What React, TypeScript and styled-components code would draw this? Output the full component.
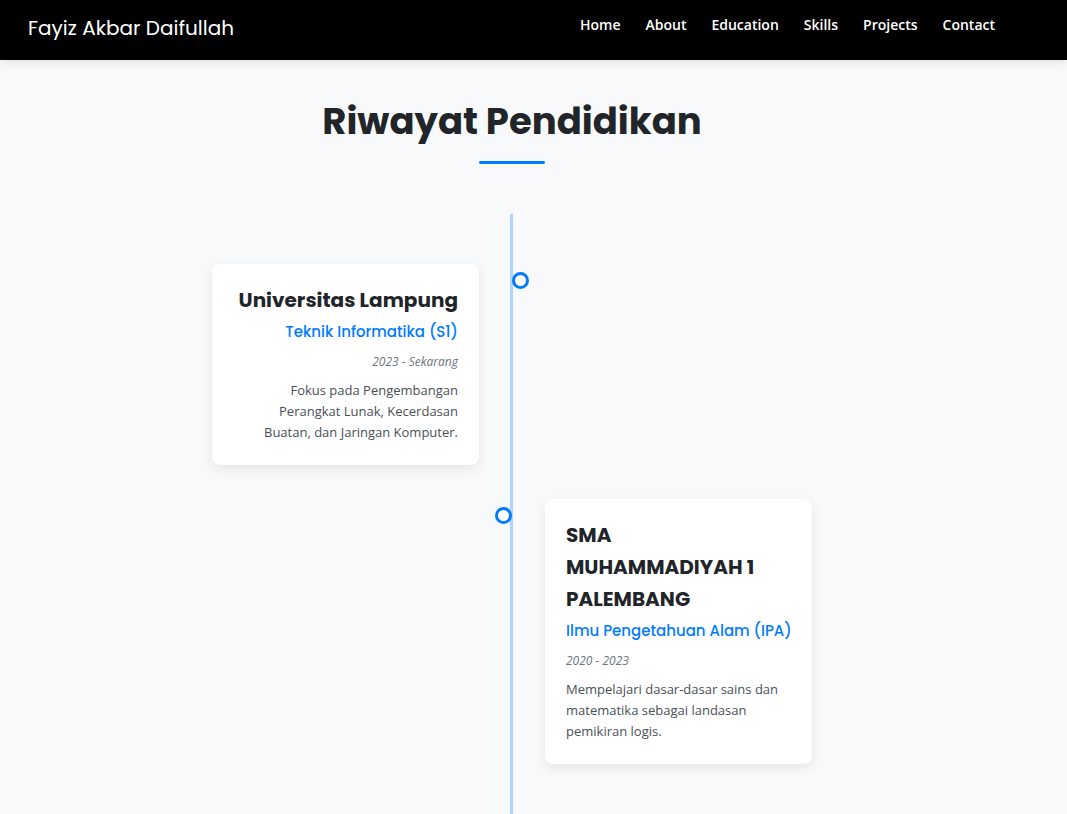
import React from "react";
import styled, { createGlobalStyle } from "styled-components";

const GlobalStyle = createGlobalStyle`
  *, *::before, *::after { box-sizing: border-box; }
  body {
    margin: 0;
    background: #f8f9fb;
    color: #212529;
    font-family: "Open Sans", "Noto Sans", sans-serif;
  }
  h1, h2, h3, h4, p, ul, ol { margin: 0; padding: 0; }
  ul, ol { list-style: none; }
`;

const displayFont = `Poppins, Inter, "Open Sans", sans-serif`;

const Header = styled.header`
  display: flex;
  justify-content: space-between;
  align-items: flex-start;
  height: 60px;
  padding: 12px 72px 0 28px;
  background: #000;
  box-shadow: 0 2px 10px rgba(0, 0, 0, 0.1);
`;

const Brand = styled.a`
  color: #fff;
  font: 400 20px/32px ${displayFont};
  text-decoration: none;
`;

const NavList = styled.ul`
  display: flex;
  gap: 25px;
`;

const NavLink = styled.a`
  display: block;
  color: #fff;
  font-size: 14px;
  font-weight: 600;
  line-height: 26px;
  text-decoration: none;
`;

const Section = styled.main`
  padding: 34px 43px 0 0;
`;

const Title = styled.h1`
  display: flex;
  flex-direction: column;
  align-items: center;
  font: 700 37px/54px ${displayFont};

  &::after {
    content: "";
    width: 66px;
    height: 3px;
    margin-top: 13px;
    border-radius: 2px;
    background: #007bff;
  }
`;

const Timeline = styled.ol`
  position: relative;
  display: flex;
  flex-direction: column;
  gap: 34px;
  max-width: 666px;
  margin: 50px auto 0;
  padding: 50px 0;

  &::before {
    content: "";
    position: absolute;
    top: 0;
    bottom: 0;
    left: calc(50% - 2px);
    width: 3px;
    background: #b0d4ff;
  }
`;

type Side = "left" | "right";

const Item = styled.li<{ $side: Side }>`
  position: relative;
  width: 50%;
  padding: 0 33px;
  align-self: ${(p) => (p.$side === "left" ? "flex-start" : "flex-end")};
  text-align: ${(p) => (p.$side === "left" ? "right" : "left")};

  &::after {
    content: "";
    position: absolute;
    top: 8px;
    ${(p) => (p.$side === "left" ? "right" : "left")}: -17px;
    width: 17px;
    height: 17px;
    border: 3px solid #007bff;
    border-radius: 50%;
    background: #fff;
  }
`;

const Card = styled.article`
  padding: 20px 21px 22px;
  border-radius: 8px;
  background: #fff;
  box-shadow: 0 4px 12px rgba(0, 0, 0, 0.08);
`;

const School = styled.h2`
  font: 700 20px/32px ${displayFont};
`;

const Major = styled.h3`
  margin-top: 4px;
  color: #007bff;
  font: 500 15px/24px ${displayFont};
  white-space: nowrap;
`;

const Period = styled.p`
  margin: 8px 0;
  color: #6c757d;
  font-size: 12px;
  font-style: italic;
  line-height: 20px;
`;

const Description = styled.p`
  color: #495057;
  font-size: 13px;
  line-height: 21px;
`;

const links = ["Home", "About", "Education", "Skills", "Projects", "Contact"];

const education: {
  side: Side;
  school: string;
  major: string;
  period: string;
  description: string;
}[] = [
  {
    side: "left",
    school: "Universitas Lampung",
    major: "Teknik Informatika (S1)",
    period: "2023 - Sekarang",
    description:
      "Fokus pada Pengembangan Perangkat Lunak, Kecerdasan Buatan, dan Jaringan Komputer.",
  },
  {
    side: "right",
    school: "SMA MUHAMMADIYAH 1 PALEMBANG",
    major: "Ilmu Pengetahuan Alam (IPA)",
    period: "2020 - 2023",
    description:
      "Mempelajari dasar-dasar sains dan matematika sebagai landasan pemikiran logis.",
  },
];

export default function App() {
  return (
    <>
      <GlobalStyle />
      <Header>
        <Brand href="#home">Fayiz Akbar Daifullah</Brand>
        <nav>
          <NavList>
            {links.map((label) => (
              <li key={label}>
                <NavLink href={`#${label.toLowerCase()}`}>{label}</NavLink>
              </li>
            ))}
          </NavList>
        </nav>
      </Header>
      <Section id="education">
        <Title>Riwayat Pendidikan</Title>
        <Timeline>
          {education.map((entry) => (
            <Item key={entry.school} $side={entry.side}>
              <Card>
                <School>{entry.school}</School>
                <Major>{entry.major}</Major>
                <Period>{entry.period}</Period>
                <Description>{entry.description}</Description>
              </Card>
            </Item>
          ))}
        </Timeline>
      </Section>
    </>
  );
}
